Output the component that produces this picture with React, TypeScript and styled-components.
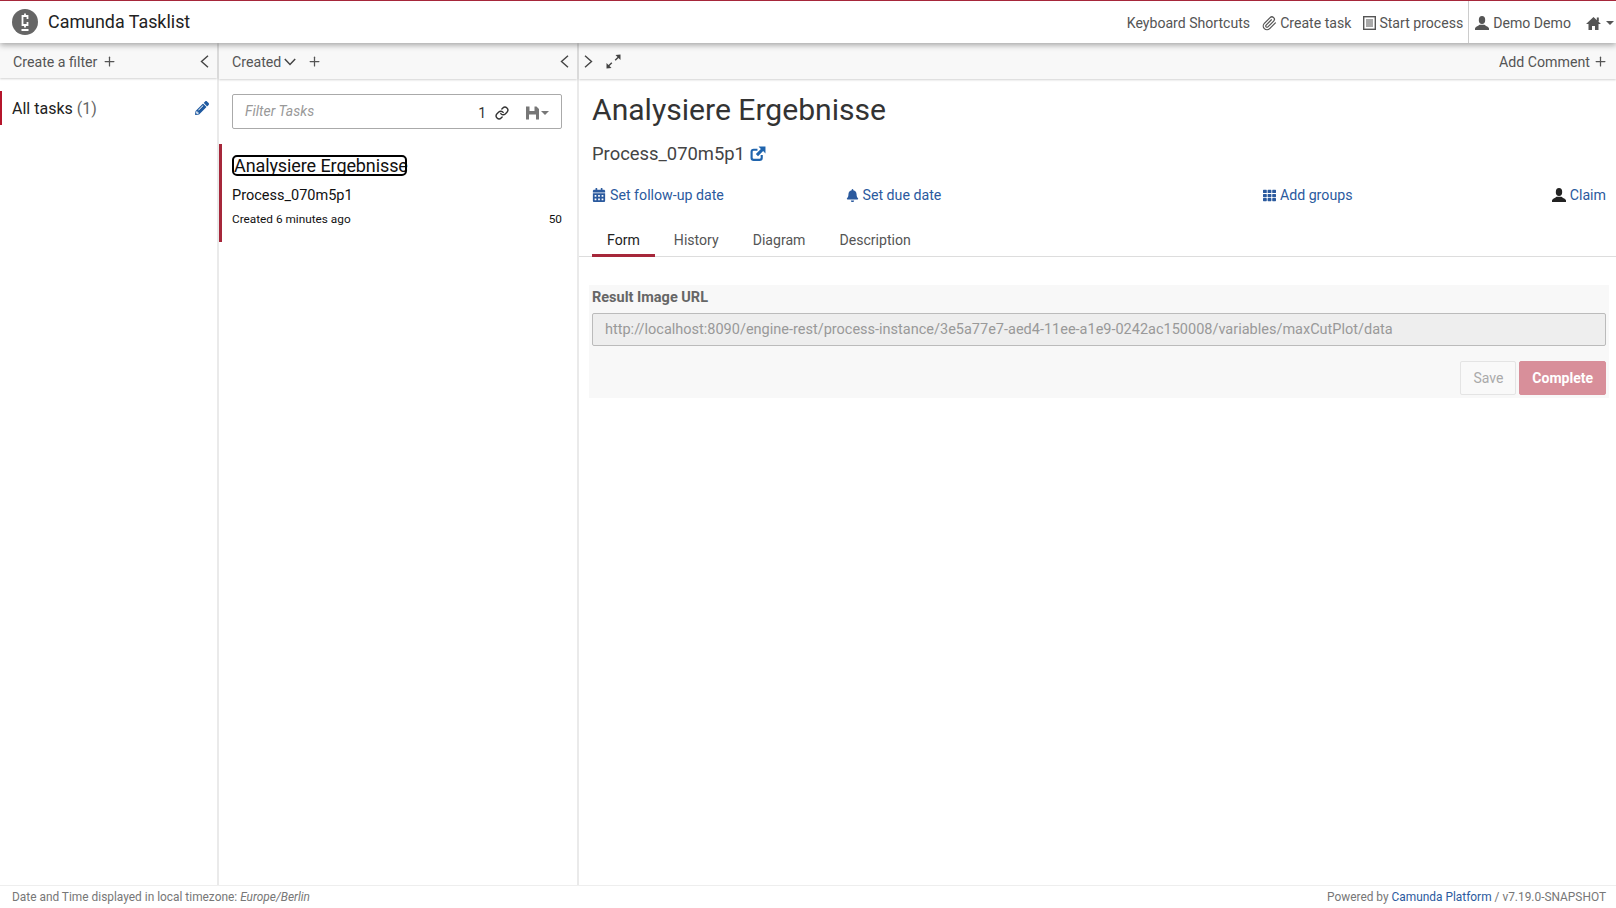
import React from 'react'
import styled, { createGlobalStyle } from 'styled-components'
import { FaBell, FaCalendarAlt, FaPencilAlt, FaTh } from 'react-icons/fa'
import { FiLink, FiPaperclip, FiPlus } from 'react-icons/fi'

const RED = '#b5152b'
const DARK_RED = '#a6273a'
const BLUE = '#1f5aa0'
const LINK = '#2b5a9e'
const TEXT = '#333'
const MUTED = '#555'

const GlobalStyles = createGlobalStyle`
  html, body {
    margin: 0;
    height: 100%;
    background: #fff;
    overflow: hidden;
  }
  body {
    font-family: Roboto, "Noto Sans", "Liberation Sans", sans-serif;
    font-size: 14px;
    color: ${TEXT};
  }
  #root { height: 100%; }
  * { box-sizing: border-box; }
`

const Page = styled.div`
  height: 908px;
  display: flex;
  flex-direction: column;
`

const Header = styled.header`
  position: relative;
  z-index: 3;
  height: 43px;
  flex: none;
  display: flex;
  align-items: center;
  justify-content: space-between;
  background: #fff;
  border-top: 1px solid ${DARK_RED};
  box-shadow: 0 2px 6px rgba(0, 0, 0, 0.35);
`

const Brand = styled.div`
  display: flex;
  align-items: center;
  gap: 10px;
  padding: 0 0 1px 12px;
  font-size: 17.9px;
  color: #222;
`

const Nav = styled.nav`
  display: flex;
  align-items: center;
  height: 100%;
  font-size: 14.1px;
  color: ${MUTED};
`

const NavItem = styled.span<{ $divided?: boolean; $left?: number; $right?: number }>`
  display: flex;
  align-items: center;
  gap: ${p => (p.$divided ? 4 : 3)}px;
  height: 100%;
  padding-top: 2px;
  margin-left: ${p => p.$left ?? 0}px;
  padding-right: ${p => p.$right ?? 0}px;
  border-left: ${p => (p.$divided ? '1px solid #ccc' : 'none')};
  padding-left: ${p => (p.$divided ? 6 : 0)}px;
`

const Caret = styled.i`
  display: inline-block;
  width: 0;
  height: 0;
  margin-left: 2px;
  border-left: 4px solid transparent;
  border-right: 4px solid transparent;
  border-top: 4px solid currentColor;
`

const Columns = styled.main`
  flex: 1;
  min-height: 0;
  display: flex;
`

const Column = styled.section<{ $width?: number }>`
  position: relative;
  flex: ${p => (p.$width ? `0 0 ${p.$width}px` : '1')};
  min-width: 0;
  display: flex;
  flex-direction: column;
  border-right: ${p => (p.$width ? '2px solid #eaeaea' : 'none')};
`

const ColumnBar = styled.div<{ $height?: number; $drop?: number; $left?: number }>`
  height: ${p => p.$height ?? 36}px;
  flex: none;
  display: flex;
  align-items: center;
  justify-content: space-between;
  padding: ${p => p.$drop ?? 1}px 8px 0 ${p => p.$left ?? 13}px;
  background: #f8f8f8;
  color: ${MUTED};
  font-size: 14.2px;
  box-shadow: 0 1px 2px rgba(0, 0, 0, 0.18);
`

const BarGroup = styled.span<{ $gap?: number }>`
  display: flex;
  align-items: center;
  gap: ${p => p.$gap ?? 5}px;
`

const BarChevron = styled.svg<{ $shift?: number }>`
  flex: none;
  margin-left: ${p => p.$shift ?? 0}px;
`

const SortButton = styled.span`
  display: flex;
  align-items: center;
  gap: 3px;
  margin-right: 11px;
`

const FilterRow = styled.div`
  margin-top: 13px;
  height: 34px;
  display: flex;
  align-items: center;
  justify-content: space-between;
  padding-left: 10px;
  font-size: 16px;
  border-left: 2px solid ${RED};
  color: #222;
`

const FilterCount = styled.span`
  color: #666;
`

const FilterEdit = styled.span`
  display: flex;
  padding-right: 8px;
  color: ${BLUE};
`

const TaskFilter = styled.div`
  margin: 15px 15px 0 13px;
  height: 35px;
  display: flex;
  align-items: center;
  padding: 0 12px;
  border: 1px solid #aaa;
  border-radius: 2px;
  color: #333;
`

const FilterPlaceholder = styled.span`
  flex: 1;
  margin-top: -2px;
  color: #999;
  font-style: italic;
`

const FilterIcons = styled.span`
  display: flex;
  align-items: center;
  gap: 9px;
  padding-top: 3px;
`

const SaveIcon = styled.span`
  display: flex;
  align-items: center;
  margin-left: 8px;
  color: #777;
`

const TaskCard = styled.article`
  margin-top: 15px;
  padding: 13px 15px 0 10px;
  height: 98px;
  border-left: 3px solid ${DARK_RED};
  color: #111;
`

const TaskName = styled.a`
  display: block;
  width: 171px;
  height: 17px;
  margin-left: 2px;
  line-height: 17px;
  font-size: 18px;
  letter-spacing: -0.1px;
  white-space: nowrap;
  color: #111;
  outline: 2px solid #000;
  border-radius: 3px;
`

const TaskProcess = styled.div`
  margin-top: 13px;
  font-size: 14.5px;
  line-height: 17px;
`

const TaskMeta = styled.div`
  margin-top: 8px;
  display: flex;
  justify-content: space-between;
  font-size: 11.8px;
  line-height: 14px;
`

const Details = styled.div`
  padding: 0 10px 0 13px;
`

const TaskTitle = styled.h1`
  margin: 12px 0 0;
  font-size: 30.1px;
  font-weight: 400;
  line-height: 38px;
  color: #333;
`

const ProcessLink = styled.div`
  margin-top: 12px;
  display: flex;
  align-items: center;
  gap: 5px;
  font-size: 18.4px;
  line-height: 26px;
  color: #444;
`

const Actions = styled.div`
  margin-top: 18px;
  display: grid;
  grid-template-columns: repeat(4, 1fr);
  height: 20px;
  align-items: center;
`

const Action = styled.a<{ $end?: boolean }>`
  display: flex;
  align-items: center;
  gap: 4px;
  justify-content: ${p => (p.$end ? 'flex-end' : 'flex-start')};
  color: ${LINK};
  font-size: 14.2px;
`

const Tabs = styled.div`
  margin: 16px -10px 0 -13px;
  padding-left: 13px;
  display: flex;
  height: 36px;
  border-bottom: 1px solid #ddd;
`

const Tab = styled.span<{ $active?: boolean }>`
  padding: 5px 15px 0;
  margin-bottom: -1px;
  margin-right: 4px;
  display: flex;
  align-items: center;
  font-size: 14.1px;
  color: ${p => (p.$active ? '#222' : MUTED)};
  border-bottom: ${p => (p.$active ? `3px solid ${DARK_RED}` : '3px solid transparent')};
`

const FormPanel = styled.form`
  margin: 28px -3px 0 -3px;
  height: 113px;
  padding: 1px 3px 0;
  background: #f8f8f8;
`

const FieldLabel = styled.label`
  display: block;
  height: 27px;
  line-height: 24px;
  font-weight: 700;
  font-size: 14.5px;
  color: #666;
`

const FieldValue = styled.input`
  display: block;
  width: 100%;
  height: 33px;
  padding: 0 12px;
  font: inherit;
  font-size: 14.5px;
  color: #999;
  background: #eee;
  border: 1px solid #bbb;
  border-radius: 2px;
`

const FormButtons = styled.div`
  margin-top: 15px;
  display: flex;
  justify-content: flex-end;
  gap: 3px;
`

const FormButton = styled.button<{ $primary?: boolean }>`
  height: 34px;
  padding: 0 12px;
  font: inherit;
  font-size: 14px;
  font-weight: ${p => (p.$primary ? 700 : 400)};
  color: ${p => (p.$primary ? '#fff' : '#aaa')};
  background: ${p => (p.$primary ? '#d88f9a' : '#f9f9f9')};
  border: 1px solid ${p => (p.$primary ? '#d88f9a' : '#e4e4e4')};
  border-radius: 2px;
`

const Footer = styled.footer`
  height: 23px;
  flex: none;
  display: flex;
  align-items: center;
  justify-content: space-between;
  padding: 0 10px 0 12px;
  font-size: 11.9px;
  color: #777;
  background: #fff;
  border-top: 1px solid #eee;
`

const FooterLink = styled.a`
  color: ${LINK};
`

function CamundaLogo() {
  return (
    <svg width="26" height="26" viewBox="0 0 26 26">
      <circle cx="13" cy="13" r="13" fill="#666" />
      <path d="M15.500 10V7h-5v9h5v-3" fill="none" stroke="#fff" strokeWidth="1.800" />
      <path d="M13 4.500v2.500M13 16v2.500M9.500 21h7" stroke="#fff" strokeWidth="1.800" />
    </svg>
  )
}

function Chevron({ left, shift }: { left?: boolean; shift?: number }) {
  return (
    <BarChevron $shift={shift} width="9" height="13" viewBox="0 0 9 13">
      <path d={left ? 'M8 .8 1.500 6.500 8 12.200' : 'M1 .8 7.500 6.500 1 12.200'} fill="none" stroke="#444" strokeWidth="1.400" />
    </BarChevron>
  )
}

function SortChevron() {
  return (
    <svg width="12" height="8" viewBox="0 0 12 8">
      <path d="M.8 1 6 6.500 11.200 1" fill="none" stroke="#444" strokeWidth="1.500" />
    </svg>
  )
}

function UserIcon({ color }: { color?: string }) {
  return (
    <svg width="14" height="14" viewBox="0 0 14 14" fill={color ?? 'currentColor'}>
      <ellipse cx="7" cy="4" rx="3.200" ry="4" />
      <path d="M0 14v-1.500c0-1.500 3-2.200 4.500-3.700h5c1.500 1.500 4.500 2.200 4.500 3.700V14z" />
    </svg>
  )
}

function HomeIcon() {
  return (
    <svg width="15" height="14" viewBox="0 0 15 14" fill="currentColor">
      <path d="M7.500 1l7.500 7h-2.500v6H9v-4H6v4H2.500V8H0z" />
      <rect x="10.800" y="1.500" width="2" height="4" />
    </svg>
  )
}

function ListIcon() {
  return (
    <svg width="13" height="14" viewBox="0 0 13 14">
      <rect x=".7" y=".7" width="11.600" height="12.600" fill="none" stroke="currentColor" strokeWidth="1.400" />
      <path d="M3 4h7M3 6h7M3 8h7M3 10h7" stroke="currentColor" strokeWidth="1.100" />
    </svg>
  )
}

function FloppyIcon() {
  return (
    <svg width="13" height="14" viewBox="0 0 13 14" fill="currentColor">
      <path fillRule="evenodd" d="M0 .5h10.500L13 3v10.500H0zM3.500.5V5h5V.5zM3 8.500v5h7v-5z" />
    </svg>
  )
}

function NewWindowIcon() {
  return (
    <svg width="16" height="16" viewBox="0 0 15 15" fill="#1f64ad">
      <path d="M10 8.500V11a1 1 0 0 1-1 1H3.500a1 1 0 0 1-1-1V5.500a1 1 0 0 1 1-1H7V2.500H3.500A3 3 0 0 0 .5 5.500V11a3 3 0 0 0 3 3H9a3 3 0 0 0 3-3V8.500z" />
      <path d="M8 .5h6.500V7L12.300 4.800 7.500 9.500 5.500 7.500l4.700-4.800z" />
    </svg>
  )
}

function ResizeIcon() {
  return (
    <svg width="15" height="15" viewBox="0 0 15 15" fill="#444">
      <path d="M14.500.5v5.500l-2-2-2.800 2.800-1-1 2.800-2.800-2-2z" />
      <path d="M.5 14.500V9l2 2 2.800-2.800 1 1-2.800 2.800 2 2z" />
    </svg>
  )
}

export default function App() {
  return (
    <Page>
      <GlobalStyles />
      <Header>
        <Brand>
          <CamundaLogo />
          Camunda Tasklist
        </Brand>
        <Nav>
          <NavItem>Keyboard Shortcuts</NavItem>
          <NavItem $left={12}><FiPaperclip size={15} /> Create task</NavItem>
          <NavItem $left={12} $right={5}><ListIcon /> Start process</NavItem>
          <NavItem $divided $right={15}><UserIcon /> Demo Demo</NavItem>
          <NavItem $right={2}><HomeIcon /><Caret /></NavItem>
        </Nav>
      </Header>
      <Columns>
        <Column $width={219}>
          <ColumnBar $height={35} $drop={2}>
            <BarGroup>Create a filter <FiPlus size={15} /></BarGroup>
            <Chevron left />
          </ColumnBar>
          <FilterRow>
            <span>All tasks <FilterCount>(1)</FilterCount></span>
            <FilterEdit><FaPencilAlt size={14} /></FilterEdit>
          </FilterRow>
        </Column>
        <Column $width={360}>
          <ColumnBar>
            <BarGroup $gap={0}>
              <SortButton>Created <SortChevron /></SortButton>
              <FiPlus size={15} />
            </BarGroup>
            <Chevron left />
          </ColumnBar>
          <TaskFilter>
            <FilterPlaceholder>Filter Tasks</FilterPlaceholder>
            <FilterIcons>
              1
              <FiLink size={14} strokeWidth={2.4} />
              <SaveIcon><FloppyIcon /><Caret /></SaveIcon>
            </FilterIcons>
          </TaskFilter>
          <TaskCard>
            <TaskName>Analysiere Ergebnisse</TaskName>
            <TaskProcess>Process_070m5p1</TaskProcess>
            <TaskMeta>
              <span>Created 6 minutes ago</span>
              <span>50</span>
            </TaskMeta>
          </TaskCard>
        </Column>
        <Column>
          <ColumnBar $left={12}>
            <BarGroup $gap={13}><Chevron shift={-7} /><ResizeIcon /></BarGroup>
            <BarGroup $gap={3}>Add Comment <FiPlus size={15} /></BarGroup>
          </ColumnBar>
          <Details>
            <TaskTitle>Analysiere Ergebnisse</TaskTitle>
            <ProcessLink>Process_070m5p1 <NewWindowIcon /></ProcessLink>
            <Actions>
              <Action><FaCalendarAlt size={14} /> Set follow-up date</Action>
              <Action><FaBell size={13} /> Set due date</Action>
              <Action $end><FaTh size={13} /> Add groups</Action>
              <Action $end><UserIcon color="#222" /> Claim</Action>
            </Actions>
            <Tabs>
              <Tab $active>Form</Tab>
              <Tab>History</Tab>
              <Tab>Diagram</Tab>
              <Tab>Description</Tab>
            </Tabs>
            <FormPanel>
              <FieldLabel>Result Image URL</FieldLabel>
              <FieldValue readOnly value="http://localhost:8090/engine-rest/process-instance/3e5a77e7-aed4-11ee-a1e9-0242ac150008/variables/maxCutPlot/data" />
              <FormButtons>
                <FormButton type="button">Save</FormButton>
                <FormButton type="button" $primary>Complete</FormButton>
              </FormButtons>
            </FormPanel>
          </Details>
        </Column>
      </Columns>
      <Footer>
        <span>Date and Time displayed in local timezone: <em>Europe/Berlin</em></span>
        <span>Powered by <FooterLink>Camunda Platform</FooterLink> / v7.19.0-SNAPSHOT</span>
      </Footer>
    </Page>
  )
}
